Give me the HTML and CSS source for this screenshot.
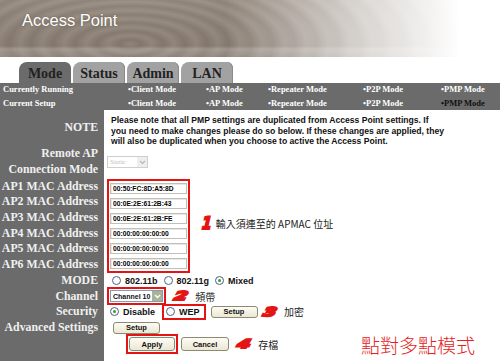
FILE: index.html
```html
<!DOCTYPE html>
<html lang="zh-Hant">
<head>
    <meta charset="UTF-8">
    <meta name="viewport" content="width=device-width, initial-scale=1.0">
    <title>Access Point - Mode</title>
    <link rel="stylesheet" href="styles.css">
</head>

<body>

    <div class="header">
        <h1 class="title">Access Point</h1>
    </div>

    <div class="tabs">
        <div class="tab active">Mode</div>
        <div class="tab">Status</div>
        <div class="tab">Admin</div>
        <div class="tab">LAN</div>
    </div>

    <div class="mode-bar">
        <div class="mode-label">Currently Running</div>
        <div>&bull;Client Mode</div>
        <div>&bull;AP Mode</div>
        <div>&bull;Repeater Mode</div>
        <div>&bull;P2P Mode</div>
        <div>&bull;PMP Mode</div>

        <div class="mode-label">Current Setup</div>
        <div>&bull;Client Mode</div>
        <div>&bull;AP Mode</div>
        <div>&bull;Repeater Mode</div>
        <div>&bull;P2P Mode</div>
        <div class="current">&bull;PMP Mode</div>
    </div>

    <div class="form">
        <div class="label">NOTE</div>
        <div class="note">
            Please note that all PMP settings are duplicated from Access Point settings. If<br>
            you need to make changes please do so below. If these changes are applied, they<br>
            will also be duplicated when you choose to active the Access Point.
        </div>

        <div class="label">Remote AP<br>Connection Mode</div>
        <div class="field field-remote">
            <span class="select select-static disabled">
                <span class="select-value">Static</span>
                <span class="select-arrow"><svg width="7" height="5" viewBox="0 0 7 5"><polyline points="1,1 3.5,3.5 6,1" fill="none" stroke="currentColor" stroke-width="1.2"/></svg></span>
            </span>
        </div>

        <div class="label">AP1 MAC Address<br>AP2 MAC Address<br>AP3 MAC Address<br>AP4 MAC Address<br>AP5 MAC Address<br>AP6 MAC Address</div>
        <div class="field field-mac">
            <div class="mark mac-list">
                <input class="mac" type="text" value="00:50:FC:8D:A5:8D">
                <input class="mac" type="text" value="00:0E:2E:61:2B:43">
                <input class="mac" type="text" value="00:0E:2E:61:2B:FE">
                <input class="mac" type="text" value="00:00:00:00:00:00">
                <input class="mac" type="text" value="00:00:00:00:00:00">
                <input class="mac" type="text" value="00:00:00:00:00:00">
            </div>
            <span class="step step-one">1</span>
            <span class="hint">輸入須連至的 APMAC 位址</span>
        </div>

        <div class="label">MODE</div>
        <div class="field field-mode">
            <span class="radio-item"><span class="radio"></span>802.11b</span>
            <span class="radio-item"><span class="radio"></span>802.11g</span>
            <span class="radio-item"><span class="radio checked"></span>Mixed</span>
        </div>

        <div class="label">Channel</div>
        <div class="field field-channel">
            <span class="mark">
                <span class="select select-channel">
                    <span class="select-value">Channel 10</span>
                    <span class="select-arrow"><svg width="7" height="5" viewBox="0 0 7 5"><polyline points="1,1 3.5,3.5 6,1" fill="none" stroke="currentColor" stroke-width="1.4"/></svg></span>
                </span>
            </span>
            <span class="step step-wide">2</span>
            <span class="hint">頻帶</span>
        </div>

        <div class="label">Security</div>
        <div class="field field-security">
            <span class="radio-item"><span class="radio checked"></span>Disable</span>
            <span class="mark mark-wep"><span class="radio-item"><span class="radio"></span>WEP</span></span>
            <button class="btn btn-setup">Setup</button>
            <span class="step step-wide step-tight">3</span>
            <span class="hint">加密</span>
        </div>

        <div class="label">Advanced Settings</div>
        <div class="field field-advanced">
            <button class="btn btn-setup">Setup</button>
        </div>

        <div class="label"></div>
        <div class="field field-apply">
            <span class="mark mark-apply"><button class="btn btn-apply">Apply</button></span>
            <button class="btn btn-cancel">Cancel</button>
            <span class="step step-wide">4</span>
            <span class="hint">存檔</span>
            <span class="page-mode">點對多點模式</span>
        </div>
    </div>

</body>

</html>
```

FILE: styles.css
```css
:root {
    --clr-panel: #6b6b6b;
    --clr-tab: #a2a2a2;
    --clr-mark: #e41414;
    --row: 15.6px;
}

* {
    box-sizing: border-box;
}

body {
    margin: 0;
    width: 500px;
    background: #fff;
    font-family: "Liberation Sans", Arial, sans-serif;
}

/* header banner */

.header {
    height: 57px;
    padding: 10px 0 0 22px;
    background:
        linear-gradient(180deg, rgba(255, 255, 255, 0) 46px, rgba(255, 255, 255, 0.2) 49px, rgba(255, 255, 255, 0.1) 57px),
        linear-gradient(90deg, rgba(255, 255, 255, 0) 45%, rgba(255, 255, 255, 0.65) 72%, #fff 92%),
        repeating-radial-gradient(ellipse 340px 130px at 130px 44px, rgba(255, 255, 255, 0.07) 0, rgba(70, 55, 45, 0.08) 11px, rgba(255, 255, 255, 0.07) 22px),
        linear-gradient(180deg, #958a7f, #84786d);
}

.title {
    margin: 0;
    font: 16.5px/20px "Liberation Sans", Arial, sans-serif;
    color: #fff;
    text-shadow: 0 0 2px rgba(60, 50, 40, 0.5);
}

/* tabs */

.tabs {
    display: flex;
    gap: 2px;
    padding: 5px 0 0 19px;
}

.tab {
    width: 52px;
    height: 21px;
    border-radius: 8px 6px 0 0;
    background: var(--clr-tab);
    box-shadow: inset -1px 0 0 #8a8a8a;
    color: #222;
    font: bold 14px/23px "Liberation Serif", serif;
    text-align: center;
}

.tab.active {
    background: var(--clr-panel);
    box-shadow: none;
}

/* mode bar */

.mode-bar {
    display: grid;
    grid-template-columns: 125px 78px 62px 95px 78px 1fr;
    height: 27px;
    padding-left: 3px;
    background: var(--clr-panel);
    color: #fff;
    font: bold 8.5px/12px "Liberation Serif", serif;
}

.mode-bar .current {
    color: #111;
}

/* form */

.form {
    display: grid;
    grid-template-columns: 104px 1fr;
    grid-template-rows: 36px 32px 95px repeat(4, var(--row)) 18px 1fr;
    min-height: 251px;
    background: linear-gradient(90deg, var(--clr-panel) 104px, #fff 104px);
}

.label {
    display: flex;
    flex-direction: column;
    justify-content: center;
    padding-right: 6px;
    color: #f0f0f0;
    font: bold 11.8px/var(--row) "Liberation Serif", serif;
    text-align: right;
    white-space: nowrap;
}

.note {
    padding: 5px 0 0 7px;
    color: #111;
    font: bold 8.6px/10.5px "Liberation Sans", Arial, sans-serif;
    white-space: nowrap;
}

.field {
    display: flex;
    align-items: center;
    white-space: nowrap;
    color: #111;
    font: bold 9px "Liberation Sans", Arial, sans-serif;
}

.mark {
    display: inline-flex;
    align-items: center;
    border: 2px solid var(--clr-mark);
    padding: 1px;
}

.hint {
    color: #222;
    font: 10px "Noto Sans CJK TC", sans-serif;
}

/* red step numbers */

.step {
    display: inline-block;
    color: var(--clr-mark);
    -webkit-text-stroke: 2px var(--clr-mark);
    font: italic bold 13px/1 "DejaVu Sans", sans-serif;
}

.step-one {
    margin: 0 3px 0 11px;
    font-size: 17px;
    transform: scaleX(0.8) skewX(-6deg);
}

.step-wide {
    transform: scaleX(1.55) skewX(-10deg);
    font-size: 12px;
    margin: 0 10px 0 11px;
}

.step-tight {
    margin-left: 8px;
}

/* selects */

.select {
    display: inline-flex;
    align-items: center;
    justify-content: space-between;
    height: 12px;
    border: 1px solid #7f9db9;
    background: #fff;
}

.select-value {
    padding-left: 2px;
    font: bold 7px "Liberation Sans", Arial, sans-serif;
}

.select-arrow {
    display: flex;
    align-items: center;
    justify-content: center;
    width: 10px;
    height: 10px;
    background: #a9b395;
    color: #fff;
}

.field-remote {
    padding-left: 3px;
}

.select-static {
    width: 41px;
}

.select.disabled {
    border-color: #cfcfcf;
}

.select.disabled .select-value {
    color: #bcbcbc;
    font: 7px "Liberation Serif", serif;
}

.select.disabled .select-arrow {
    background: #eeeeee;
    color: #b5b5b5;
}

.select-channel {
    width: 53px;
}

/* mac list */

.field-mac {
    align-items: flex-start;
    padding: 1px 0 0 3px;
}

.mac-list {
    flex-direction: column;
    gap: 4px;
    padding: 2px 1px;
}

.field-mac .step,
.field-mac .hint {
    align-self: center;
    margin-top: -6px;
}

.mac {
    width: 77px;
    height: 11px;
    padding: 0 2px;
    border: 1px solid #c0c0b8;
    box-shadow: inset 1px 1px 0 #e8e8e0;
    font: bold 6.7px "Liberation Sans", Arial, sans-serif;
    color: #000;
}

/* radios */

.radio-item {
    display: inline-flex;
    align-items: center;
    gap: 4px;
    margin-right: 6px;
}

.radio {
    position: relative;
    width: 9px;
    height: 9px;
    border: 1px solid #4d6185;
    border-radius: 50%;
    background: #fbfbfb;
}

.radio.checked::after {
    content: "";
    position: absolute;
    left: 2px;
    top: 2px;
    width: 3px;
    height: 3px;
    border-radius: 50%;
    background: #3a9a3a;
}

.field-mode {
    padding-left: 8px;
}

.field-channel {
    padding-left: 3px;
}

.field-security {
    padding-left: 6px;
}

.field-security > .radio-item {
    margin-right: 7px;
}

.mark-wep {
    padding: 1px 2px;
    margin-right: 5px;
}

.mark-wep .radio-item {
    margin-right: 2px;
}

/* buttons */

.btn {
    height: 12px;
    padding: 0;
    border: 1px solid #8b8a72;
    border-radius: 3px;
    background: linear-gradient(180deg, #fdfcf6, #ebe7d2);
    color: #111;
    font: bold 7.5px "Liberation Sans", Arial, sans-serif;
}

.btn-setup {
    width: 47px;
}

.field-advanced {
    padding-left: 9px;
}

.field-apply {
    padding-left: 22px;
}

.mark-apply {
    padding: 1px;
    margin-right: 3px;
}

.btn-apply {
    width: 46px;
    height: 14px;
}

.btn-cancel {
    width: 48px;
    height: 14px;
}

.page-mode {
    margin: 0 25px 0 auto;
    color: #e42020;
    font: 300 19px/1 "Noto Sans CJK TC", sans-serif;
}
```
